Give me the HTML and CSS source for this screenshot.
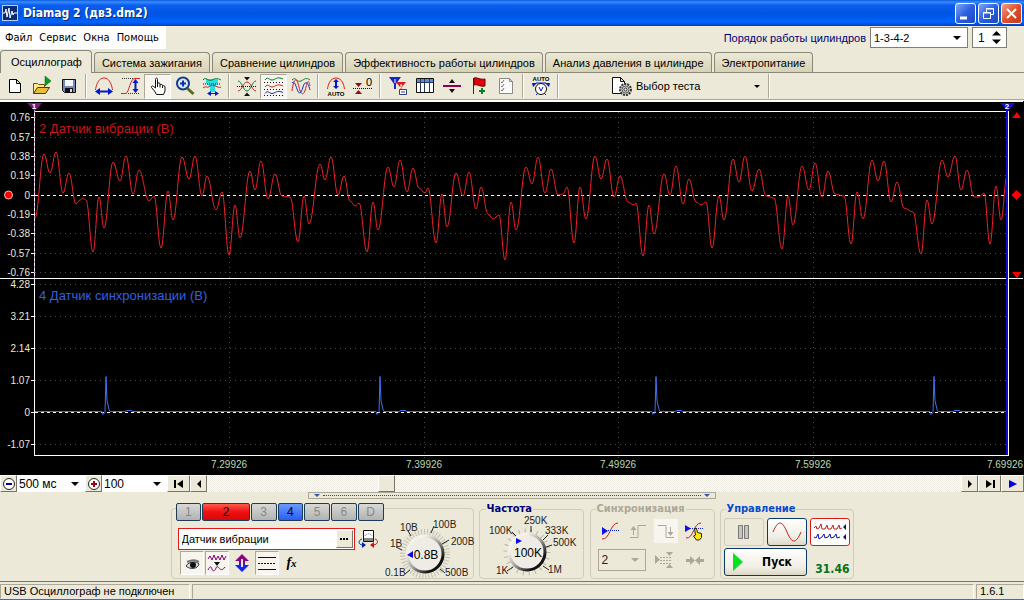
FILE: index.html
```html
<!DOCTYPE html>
<html lang="ru">
<head>
<meta charset="utf-8">
<title>Diamag 2 (дв3.dm2)</title>
<link rel="stylesheet" href="styles.css">
</head>
<body>
<div class="window">
<header class="titlebar">
  <svg class="app-icon" width="16" height="16" viewBox="0 0 16 16"><rect width="16" height="16" fill="#b8d0f8"/><rect x="1" y="1" width="14" height="14" fill="#0a2a78"/><path d="M1 8h2l1-4 1 8 2-9 1 10 2-7 1 4 1-2h3" fill="none" stroke="#fff"/></svg>
  <h1>Diamag 2 (дв3.dm2)</h1>
  <div class="window-buttons">
    <button class="wb" aria-label="Свернуть"><svg width="19" height="19" viewBox="0 0 19 19"><path d="M4 14h7" stroke="#fff" stroke-width="3"/></svg></button>
    <button class="wb" aria-label="Восстановить"><svg width="19" height="19" viewBox="0 0 19 19" fill="none" stroke="#fff"><path d="M7.500 8V4.500h7v6H12M7 5h8M4.500 8.500h7v6h-7zM4 9h8"/></svg></button>
    <button class="wb wb-close" aria-label="Закрыть"><svg width="19" height="19" viewBox="0 0 19 19"><path d="M5 5l9 9M14 5l-9 9" stroke="#fff" stroke-width="2"/></svg></button>
  </div>
</header>

<div class="menu-row">
  <nav class="menu"><button>Файл</button><button>Сервис</button><button>Окна</button><button>Помощь</button></nav>
  <div class="order">
    <label for="order">Порядок работы цилиндров</label>
    <span class="drop order-drop"><select id="order"><option>1-3-4-2</option></select></span>
    <span class="spin"><input id="cyl" type="text" value="1" aria-label="Цилиндр"><svg width="9" height="13" viewBox="0 0 9 13"><path d="M0 4.500L4.500 0 9 4.500zM0 8.500L4.500 13 9 8.500z"/></svg></span>
  </div>
</div>

<div class="tabs" role="tablist">
  <button class="tab active" role="tab">Осциллограф</button>
  <button class="tab" role="tab">Система зажигания</button>
  <button class="tab" role="tab">Сравнение цилиндров</button>
  <button class="tab" role="tab">Эффективность работы цилиндров</button>
  <button class="tab" role="tab">Анализ давления в цилиндре</button>
  <button class="tab" role="tab">Электропитание</button>
</div>

<div class="toolbar">
  <button class="tool" aria-label="Новый"><svg viewBox="0 0 20 20"><path d="M4.500 3.500h7l4 4v9h-11zM11.500 3.500v4h4" fill="#fff" stroke="#000"/></svg></button>
  <button class="tool" aria-label="Открыть"><svg viewBox="0 0 20 20"><path d="M1.500 17.500v-10h4l1 1h6v3" fill="#ffe98a" stroke="#6b5200"/><path d="M1.500 17.500l4-6h12l-4 6z" fill="#e9bd3a" stroke="#4a3900"/><path d="M13 0l6 5-6 5z" fill="#0a9a20" stroke="#056010" stroke-width=".5"/></svg></button>
  <button class="tool" aria-label="Сохранить"><svg viewBox="0 0 20 20"><path d="M3.500 3.500h13v13h-11l-2-2z" fill="#7a86b4" stroke="#111"/><path d="M6 4h8v6H6z" fill="#f4f6ff"/><path d="M6 12h8v4H6z" fill="#111"/><path d="M11 13h2v3h-2z" fill="#ddd"/></svg></button>
  <span class="sep"></span>
  <button class="tool" aria-label="Период"><svg viewBox="0 0 20 20" fill="none"><path d="M1.500 14C2 10 4 2 10 2s8 8 8.500 12" stroke="#e02020"/><path d="M4 15.500h12" stroke="#0018c8" stroke-width="2"/><path d="M1 15.500l5-3.500v7zM19 15.500l-5-3.500v7z" fill="#0018c8"/></svg></button>
  <button class="tool" aria-label="Амплитуда"><svg viewBox="0 0 20 20" fill="none"><path d="M0 17.500h5c3-1 4-15 9-15h5" stroke="#e02020"/><path d="M1 2.500h11M7 17.500h12" stroke="#333" stroke-dasharray="1 1"/><path d="M14.500 5v10" stroke="#0018c8" stroke-width="2"/><path d="M14.500 3l-3 4h6zM14.500 17l-3-4h6z" fill="#0018c8"/></svg></button>
  <button class="tool pressed" aria-label="Рука"><svg viewBox="0 0 20 20"><path d="M7.500 12V3.500c0-2 2-2 2 0V9v-1c0-1.500 2.500-1.500 2.500 0v1.500c0-1.500 2.500-1.500 2.500 0v1c0-1.200 2.500-1.200 2.500.5v4l-1.500 3.500h-7l-2-3.500-3-3.500c-.5-1.500 1-2 2-1z" fill="#fff" stroke="#111"/><path d="M9.500 9v2M12 9.500v2M14.500 10v2" stroke="#111"/></svg></button>
  <button class="tool" aria-label="Масштаб"><svg viewBox="0 0 20 20"><path d="M12.500 12.500l6 5.500" stroke="#5a6a20" stroke-width="3"/><circle cx="8" cy="7.500" r="6" fill="#d4eaff" stroke="#193a86" stroke-width="2"/><path d="M5 7.500h6M8 4.500v6" stroke="#1330a0" stroke-width="2"/></svg></button>
  <button class="tool" aria-label="Фильтр"><svg viewBox="0 0 20 20" fill="none"><path d="M4 3h12v4l-3 4v5H8v-5L4 7z" fill="#1fe0e8"/><path d="M1 4c3-4 5 2 9 0s5-2 9 0" stroke="#087f30"/><path d="M1 8h18" stroke="#111" stroke-dasharray="1 1"/><path d="M1 12c3-3 4 1 7-2s8 3 11 1" stroke="#d02020"/><path d="M8 17.500h6" stroke="#0018c8"/><path d="M5 17.500l4-2.500v5zM17 17.500L13 15v5z" fill="#0018c8"/></svg></button>
  <span class="sep"></span>
  <button class="tool" aria-label="Совместить"><svg viewBox="0 0 20 20" fill="none"><path d="M1 5c4 0 5 10 9 10s5-10 9-10" stroke="#087f30"/><path d="M1 15c4 0 5-9 9-9s5 9 9 9" stroke="#d02020"/><path d="M0 10.500h20" stroke="#111" stroke-dasharray="1 1"/><path d="M7 1h6l-3 3.500zM7 20h6l-3-3.500z" fill="#111"/></svg></button>
  <button class="tool pressed" aria-label="Раздельно"><svg viewBox="0 0 20 20" fill="none"><path d="M1 4c3-4 4 0 7 0s5-4 11-1" stroke="#087f30"/><path d="M0 6.500h20M0 13.500h20M0 19.500h20" stroke="#111" stroke-dasharray="1 2"/><path d="M1 11c3-4 4 0 7 0s5-4 11-1" stroke="#d02020"/><path d="M1 17.500c3-4 4 0 7 0s5-4 11-1" stroke="#1030d0"/></svg></button>
  <button class="tool" aria-label="Вместе"><svg viewBox="0 0 20 20" fill="none"><path d="M1 4c4-4 5 3 9 1s5-4 9-1" stroke="#087f30"/><path d="M1 15C3 0 6 2 8 11s5 9 7 0 3-5 4-1" stroke="#d02020"/><path d="M1 7c2-2 3 0 5 6s4 5 6-2 5-5 7 3" stroke="#1030d0"/></svg></button>
  <span class="sep"></span>
  <button class="tool" aria-label="Авто"><svg viewBox="0 0 20 20" fill="none"><path d="M1.500 13C2 9 4 2 10 2s8 7 8.500 11" stroke="#e02020"/><path d="M10 5v6" stroke="#0018c8" stroke-width="2"/><path d="M10 3L7 6h6zM10 13l-3-3h6z" fill="#0018c8"/><text x="10" y="20" class="mini">AUTO</text></svg></button>
  <button class="tool" aria-label="Ноль"><svg viewBox="0 0 20 20"><path d="M2 7h7l-3.500 4zM2 18h7l-3.500-4z" fill="#8a1020"/><path d="M0 12.500h20" stroke="#111" stroke-dasharray="1 1"/><text x="16" y="10" class="zero">0</text></svg></button>
  <span class="sep"></span>
  <button class="tool" aria-label="Маркеры"><svg viewBox="0 0 20 20"><path d="M1 1h12L8 8v5H6V8z" fill="#1525c8"/><path d="M8 6h10l-4 5v5h-2v-5z" fill="#e01818"/><path d="M7 3v4M12 9h2l-2 3h2" stroke="#fff" fill="none"/><path d="M11.500 13.500h7v5h-7z" fill="#fff" stroke="#334080"/><path d="M13 16h4" stroke="#334080"/></svg></button>
  <button class="tool" aria-label="Таблица"><svg viewBox="0 0 20 20"><path d="M1.500 2.500h17v14h-17z" fill="#fff" stroke="#111"/><path d="M2 3h16v3H2z" fill="#5f8ad8"/><path d="M5.500 3v13M9.500 3v13M14.500 3v13M2 6.500h16" stroke="#283858"/></svg></button>
  <button class="tool" aria-label="Разделитель"><svg viewBox="0 0 20 20"><path d="M1 10h18" stroke="#900050" stroke-width="2"/><path d="M7 7h6l-3-4zM7 13h6l-3 4z" fill="#111"/></svg></button>
  <button class="tool" aria-label="Флаг"><svg viewBox="0 0 20 20"><path d="M4.500 2v16" stroke="#611" /><path d="M5 2c4-1 5 2 11 1v7c-6 1-7-2-11-1z" fill="#e00010" stroke="#700"/><path d="M10 15h6M13 12v6" stroke="#068020" stroke-width="2"/></svg></button>
  <button class="tool" aria-label="Список"><svg viewBox="0 0 20 20"><path d="M3.500 2.500h10l3 3v12h-13zM13.500 2.500v3h3" fill="#fafafa" stroke="#8a8a8a"/><path d="M5 6l1 1 2-3M5 10l1 1 2-3M5 14l1 1 2-3" stroke="#777" fill="none"/></svg></button>
  <span class="sep"></span>
  <button class="tool" aria-label="Автозапуск"><svg viewBox="0 0 20 20" fill="none"><text x="10" y="5" class="mini">AUTO</text><circle cx="10" cy="13" r="5.500" fill="#fff" stroke="#111"/><path d="M8 11l2 4 2-4" stroke="#0018c8"/><path d="M3 9l2-2h10l2 2M5 19l2-2M15 19l-2-2" stroke="#0018c8"/><path d="M1 7l5 0-4 4zM19 7h-5l4 4z" fill="#0018c8"/></svg></button>
  <span class="sep"></span>
  <button class="test-pick">
    <svg width="22" height="20" viewBox="0 0 22 20"><path d="M1.500 1.500h8l4 4v12h-12zM9.500 1.500v4h4" fill="#fff" stroke="#111"/><circle cx="14.500" cy="13.500" r="5.500" fill="#d8d8d0" stroke="#333" stroke-width="2" stroke-dasharray="2 1"/><circle cx="14.500" cy="13.500" r="3.500" fill="none" stroke="#555"/><circle cx="14.500" cy="13.500" r="1.500" fill="#fff" stroke="#222"/></svg>
    <span>Выбор теста</span><i class="caret"></i>
  </button>
  <span class="sep"></span>
</div>

<main class="scope">
  <svg class="plot" viewBox="0 101 1024 374" role="img" aria-label="Осциллограмма">
    <rect y="101" width="1024" height="374"/>
    <g id="grid" class="grid"></g>
    <path class="zero-line" d="M35 195.500H1008M35 412.500H1008"/>
    <path id="trace-sync" class="trace-sync"/>
    <path id="trace-vibration" class="trace-vibration"/>
    <path class="frame" d="M0 101.500H1023M34 111.500H1008M0 278.500H1023M34 455.500H1008M34.500 107V456M1008.500 111V456"/>
    <path d="M34.500 111V278" stroke="#a020a0" stroke-opacity=".5" stroke-dasharray="2 3"/>
    <path d="M1007 107V455" stroke="#0a0ad0" stroke-width="2"/>
    <path d="M27 103h15l-7 8z" fill="#7a1a80"/><path d="M1000 103h15l-7 8z" fill="#1010e0"/>
    <text class="marker" x="34" y="109">1</text><text class="marker" x="1007" y="109">2</text>
    <path d="M1012 118h9l-4-6zM1016.500 190l5 5-5 5-5-5zM1012 272h9l-4 6z" fill="#f00"/>
    <circle cx="8.500" cy="195" r="4" fill="#f00" stroke="#fbb"/>
    <g id="axis-labels" class="axis-labels"></g>
    <text class="name red" x="39" y="133">2 Датчик вибрации (В)</text>
    <text class="name blue" x="39" y="300">4 Датчик синхронизации (В)</text>
  </svg>
</main>

<div class="timebar">
  <button class="sq" aria-label="Уменьшить"><svg width="14" height="14" viewBox="0 0 14 14"><circle cx="7" cy="7" r="5.500" fill="#fff" stroke="#222"/><path d="M4 7h6" stroke="#00a" stroke-width="2"/></svg></button>
  <span class="drop flat span-drop"><select aria-label="Развёртка"><option>500 мс</option></select></span>
  <button class="sq" aria-label="Увеличить"><svg width="14" height="14" viewBox="0 0 14 14"><circle cx="7" cy="7" r="5.500" fill="#fff" stroke="#222"/><path d="M4 7h6M7 4v6" stroke="#a00010" stroke-width="2"/></svg></button>
  <span class="drop flat zoom-drop"><select aria-label="Масштаб"><option>100</option></select></span>
  <button class="sq wide" aria-label="В начало"><svg width="12" height="8" viewBox="0 0 12 8"><path d="M1 0h2v8H1zM10 0v8L4 4z"/></svg></button>
  <button class="sq" aria-label="Назад"><svg width="8" height="8" viewBox="0 0 8 8"><path d="M6 0v8L2 4z"/></svg></button>
  <div class="track"><span class="thumb"></span></div>
  <button class="sq" aria-label="Вперёд"><svg width="8" height="8" viewBox="0 0 8 8"><path d="M2 0v8l4-4z"/></svg></button>
  <button class="sq wide" aria-label="В конец"><svg width="12" height="8" viewBox="0 0 12 8"><path d="M2 0v8l6-4zM9 0h2v8H9z"/></svg></button>
  <button class="sq wide" aria-label="Следить"><svg width="10" height="8" viewBox="0 0 10 8"><path d="M1 0v8l8-4z" fill="#0000f0"/></svg></button>
</div>

<section class="panel">
  <div class="splitter"><i></i><b></b><i></i></div>
  <div class="groups">
    <div class="group channel">
      <div class="channel-left">
        <div class="channels">
          <button>1</button><button class="c-red">2</button><button>3</button><button class="c-blue">4</button><button>5</button><button>6</button><button>D</button>
        </div>
        <div class="sensor-row">
          <div class="sensor"><input type="text" value="Датчик вибрации" aria-label="Датчик"><button aria-label="Выбрать датчик"><svg width="8" height="2" viewBox="0 0 8 2"><path d="M0 0h2v2H0zM3 0h2v2H3zM6 0h2v2H6z"/></svg></button></div>
          <button class="plain" aria-label="Калибровка"><svg width="20" height="20" viewBox="0 0 20 20" fill="none"><path d="M5.500 1.500h10v11h-10z" fill="#fff" stroke="#111"/><path d="M6 9h9v3H6z" fill="#888"/><path d="M7 7c2-3 5-3 7 0" stroke="#777" stroke-dasharray="1 1"/><path d="M4 10c-4 1-4 6 1 6" stroke="#0020b0"/><path d="M8 16l-4-3v6z" fill="#0020b0"/><path d="M17 10c4 1 3 6-2 6" stroke="#d01010"/><path d="M12 16l4-3v6z" fill="#d01010"/></svg></button>
        </div>
        <div class="channel-tools">
          <button class="pressed" aria-label="Показать"><svg viewBox="0 0 20 20"><path d="M4 13c3-5 11-5 13-2-1 5-9 6-13 2z" fill="#ddd" stroke="#333"/><circle cx="11" cy="12" r="3" fill="#111"/><path d="M5 9c4-2 8-3 12 0" fill="none" stroke="#777" stroke-width="2"/></svg></button>
          <button class="pressed" aria-label="Сигнал"><svg viewBox="0 0 20 20" fill="none" stroke="#800070"><path d="M1 6l2-3 2 4 2-5 2 5 2-4 2 4 2-5 2 5 2-4M1 17c2-4 3-4 4-1s3 2 4-1 3 0 4 1 3 1 5-2"/><path d="M7 9h6l-3 4z" fill="#111" stroke="none"/></svg></button>
          <button aria-label="Сдвиг"><svg viewBox="0 0 20 20"><path d="M10 1l7 7h-4v2H7V8H3z" fill="#900080"/><path d="M10 19l-7-7h4v-2h6v2h4z" fill="#1525f0"/><path d="M10 6v8" stroke="#ece9d8" stroke-width="2"/></svg></button>
          <button class="pressed" aria-label="Уровни"><svg viewBox="0 0 20 20" stroke="#111"><path d="M1 4.500h18M1 16.500h18"/><path d="M1 10.500h18" stroke-dasharray="2 1"/></svg></button>
          <button class="fx" aria-label="Функция"><em>f<small>x</small></em></button>
        </div>
      </div>
      <svg class="dial" width="92" height="72" viewBox="384 507 92 72">
        <defs><linearGradient id="rim" x2="1" y2="1"><stop offset=".25" stop-color="#f4f2ea"/><stop offset=".5" stop-color="#a8a8a4"/><stop offset=".8" stop-color="#111"/></linearGradient></defs>
        <circle cx="425" cy="552" r="22" fill="none" stroke="#c2c0b2" stroke-width="6" stroke-dasharray="1 2"/>
        <path d="M410 568l-5 4M402 548l-6-3M411 534l-3-5M431 531l3-7M442 542l7-4M440 567l5 4" stroke="#222"/>
        <circle cx="425" cy="552" r="18" fill="#eeece4" stroke="url(#rim)" stroke-width="3"/>
        <path d="M413 549v7l-6-3z" fill="#0a0af0"/>
        <text x="426" y="557" class="dial-value">0.8В</text>
        <text x="385" y="574">0.1В</text><text x="390" y="545">1В</text><text x="400" y="529">10В</text><text x="433" y="526">100В</text><text x="451" y="543">200В</text><text x="445" y="574">500В</text>
      </svg>
    </div>
    <fieldset class="group freq">
      <legend>Частота</legend>
      <svg class="dial" width="100" height="63" viewBox="482 515 100 63">
        <circle cx="529" cy="552" r="21" fill="none" stroke="#b8b6a8" stroke-width="5" stroke-dasharray="1 5"/>
        <path d="M515 567l-6 4M518 536l-4-4M533 532v-6M545 540l5-5M548 547l6-2M545 566l6 4" stroke="#222"/>
        <circle cx="529" cy="552" r="18" fill="#eeece4" stroke="url(#rim)" stroke-width="3"/>
        <path d="M518 538l6 3-6 3z" fill="#0a0af0"/>
        <text x="530" y="557" class="dial-value">100K</text>
        <text x="498" y="574">1K</text><text x="491" y="534">100K</text><text x="526" y="524">250K</text><text x="547" y="534">333K</text><text x="555" y="546">500K</text><text x="550" y="573">1M</text>
      </svg>
    </fieldset>
    <fieldset class="group sync">
      <legend>Синхронизация</legend>
      <div class="sync-row">
        <button aria-label="Уровень"><svg viewBox="0 0 20 20" fill="none"><path d="M2 18c8 1 8-16 16-16" stroke="#d01818"/><path d="M4 9.500h15" stroke="#0a18d0" stroke-dasharray="1 1"/><path d="M2 6l6 4-6 4z" fill="#1010f0"/></svg></button>
        <button disabled aria-label="Фронт"><svg viewBox="0 0 20 20" fill="none" stroke="#aca899"><path d="M2 16.500h8v-12h8M5.500 14V7"/><path d="M5.500 5l-3 4h6z" fill="#aca899" stroke="none"/></svg></button>
        <button disabled class="lit" aria-label="Спад"><svg viewBox="0 0 20 20" fill="none" stroke="#aca899"><path d="M2 4.500h8v12h8M14.500 6v7"/><path d="M14.500 15l-3-4h6z" fill="#aca899" stroke="none"/></svg></button>
        <button aria-label="Выбрать уровень"><svg viewBox="0 0 20 20" fill="none"><path d="M2 17c8 1 7-15 15-15" stroke="#d01818"/><path d="M4 7.500h15" stroke="#0a18d0" stroke-dasharray="1 1"/><path d="M1 4l6 3.500-6 3.500z" fill="#1010f0"/><path d="M10.500 7.500h2l1 4 4 1v4l-2 2.500h-3l-3-4 2-1z" fill="#ffe800" stroke="#222"/></svg></button>
      </div>
      <div class="sync-row">
        <span class="drop sync-drop"><select disabled aria-label="Канал синхронизации"><option>2</option></select></span>
        <button disabled aria-label="Порог"><svg viewBox="0 0 20 20"><path d="M1 5v9l5-4.500zM12 2h7l-3.500 4zM12 18h7l-3.500-4z" fill="#aca899"/><path d="M6 7.500h12M6 10.500h12M6 13.500h12" stroke="#aca899" stroke-dasharray="2 1"/></svg></button>
        <button disabled aria-label="Центр"><svg viewBox="0 0 20 20"><path d="M1 9h4V6l5 4.500L15 6v3h4v3h-4v3l-5-4.500L5 15v-3H1z" fill="#aca899"/></svg></button>
      </div>
    </fieldset>
    <fieldset class="group control">
      <legend>Управление</legend>
      <div class="control-grid">
        <button class="xp off" disabled aria-label="Пауза"><svg width="14" height="16" viewBox="0 0 14 16" fill="#c8c6ba" stroke="#777"><path d="M1.500 1.500h4v13h-4zM7.500 1.500h4v13h-4z"/></svg></button>
        <button class="xp" aria-label="Один сигнал"><svg width="30" height="20" viewBox="0 0 30 20"><path d="M1 10C6-2 10-2 15 10s9 12 14 0" fill="none" stroke="#d81818"/></svg></button>
        <button class="xp on" aria-label="Непрерывно"><svg width="34" height="18" viewBox="0 0 34 18" fill="none"><path d="M1 5l2-2 1 3 2-1 2-4 1 5 3 0 2-4 1 4 3 0 2-4 1 4 3 0 2-4 1 4 2-1" stroke="#d01818"/><path d="M1 14l2 1 2-4 1 5 3-2 2-3 1 4 3-1 2-3 1 4 3-1 2-3 1 4 3-1" stroke="#1010b0"/><path d="M33 1v6l-3-3zM33 11v6l-3-3z" fill="#101060"/></svg></button>
        <button class="xp start"><svg width="10" height="20" viewBox="0 0 10 20"><path d="M0 1l10 9-10 9z" fill="#08e020"/></svg><span>Пуск</span></button>
        <output>31.46</output>
      </div>
    </fieldset>
  </div>
</section>

<footer class="status"><span>USB Осциллограф не подключен</span><span></span><span>1.6.1</span></footer>
</div>
<script src="scope.js"></script>
</body>
</html>
```

FILE: styles.css
```css
* { box-sizing: border-box; }
body { margin: 0; background: #ece9d8; color: #000; font: 11px/14px "Liberation Sans", Arial, sans-serif; }
button, input, select { font: inherit; color: inherit; }
button { background: none; border: 0; padding: 0; display: flex; align-items: center; justify-content: center; }
.window { display: flex; flex-direction: column; min-height: 100vh; border-bottom: 2px solid #3170c4; }

.titlebar { display: flex; align-items: center; height: 26px; padding: 0 2px; gap: 5px; color: #fff;
  background: linear-gradient(#0a5ce0, #3a8cff 2px, #0a5ff0 5px, #0054e3 14px, #0064ff 22px, #0040c0); }
.titlebar h1 { flex: 1; margin: 0; font: bold 12px/20px "DejaVu Sans Condensed", "DejaVu Sans", sans-serif; text-shadow: 1px 1px #0a2a80; }
.window-buttons { display: flex; gap: 2px; }
.wb { width: 21px; height: 21px; border: 1px solid #fff; border-radius: 3px; background: linear-gradient(135deg, #7fa6f5, #2a5fe0 50%, #1c48c4); }
.wb-close { background: linear-gradient(135deg, #f0a088, #e0502c 50%, #c03a18); }

.menu-row { display: flex; justify-content: space-between; height: 24px; }
.menu { display: flex; align-items: center; gap: 7px; padding: 0 7px 0 5px; height: 23px; background: #fff; font-family: "DejaVu Sans Condensed", "DejaVu Sans", sans-serif; }
.order { display: flex; align-items: center; gap: 4px; padding: 1px 17px 2px 0; color: #000078; }
.drop { position: relative; display: block; border: 1px solid #7f7f78; background: #fff; color: #000; }
.drop select { width: 100%; height: 100%; border: 0; padding: 0 3px; background: none; appearance: none; font-size: 12px; }
.drop::after { content: ""; position: absolute; right: 6px; top: 50%; margin-top: -2px; border: 4px solid transparent; border-top-color: #000; border-bottom: 0; pointer-events: none; }
.order-drop { width: 98px; height: 21px; }
.order-drop select { font-size: 11px; }
.spin { display: flex; align-items: center; width: 35px; height: 21px; border: 1px solid #7f7f78; background: #fff; color: #000; padding-right: 5px; }
.spin input { flex: 1; min-width: 0; border: 0; padding: 0 5px; background: none; font-size: 12px; }

.tabs { display: flex; align-items: flex-end; height: 23px; gap: 2px; border-bottom: 1px solid #8a8878; }
.tab { height: 20px; padding: 0 7px; border: 1px solid #8a8878; border-bottom: 0; border-radius: 4px 4px 0 0; background: linear-gradient(#ece9d8, #d6d2b4); white-space: nowrap; }
.tab.active { height: 23px; margin-bottom: -1px; padding: 0 9px 0 10px; background: #ece9d8; }

.toolbar { display: flex; align-items: center; height: 27px; padding-left: 1px; border-bottom: 1px solid #a8a698; }
.tool { width: 27px; height: 25px; border: 1px solid transparent; }
.tool svg { width: 20px; height: 20px; }
.pressed { border: 1px solid; border-color: #aca899 #fff #fff #aca899; background: #f7f5ee; }
.sep { width: 8px; height: 24px; background: linear-gradient(90deg, transparent 3px, #aca899 3px 4px, #fff 4px 5px, transparent 5px); }
.mini { font: bold 6px "Liberation Sans", sans-serif; fill: #000; text-anchor: middle; }
.zero { font: 11px "Liberation Sans", sans-serif; text-anchor: middle; }
.test-pick { width: 203px; height: 24px; padding: 0 5px 0 49px; gap: 3px; }
.test-pick span { flex: 1; text-align: left; }
.caret { border: 3px solid transparent; border-top-color: #000; border-bottom: 0; }

.scope { display: block; border-top: 1px solid #fff; }
.plot { display: block; width: 100%; height: auto; background: #000; }
.grid path { stroke: #484c44; stroke-dasharray: 1 4; }
.zero-line { stroke: #fff; stroke-dasharray: 3 3; }
.frame { stroke: #fff; }
.trace-vibration { fill: none; stroke: #f02028; }
.trace-sync { fill: none; stroke: #3f74f4; }
.axis-labels text { font: 10px "Liberation Sans", sans-serif; fill: #e8e8d8; text-anchor: end; }
.axis-labels .time { fill: #b8d8b0; text-anchor: middle; }
.axis-labels path { stroke: #fff; }
.marker { font: bold 8px "Liberation Sans", sans-serif; fill: #fff; text-anchor: middle; }
.name { font: 13px "Liberation Sans", sans-serif; }
.red { fill: #c8141c; }
.blue { fill: #3060e0; }

.timebar { display: flex; height: 17px; }
.sq { width: 17px; flex: none; background: #ece9d8; border: 1px solid; border-color: #fff #777468 #777468 #fff; }
.wide { width: 23px; }
.flat { border: 0; }
.span-drop { width: 68px; }
.zoom-drop { width: 65px; }
.flat select { padding: 0 2px; }
.track { flex: 1; display: flex; padding-left: 171px; background: repeating-conic-gradient(#fff 0 25%, #ece9e0 0 50%) 0 0 / 2px 2px; }
.thumb { width: 17px; background: #ece9d8; border: 1px solid; border-color: #fff #777468 #777468 #fff; }

.panel { flex: 1; display: flex; flex-direction: column; align-items: center; border-bottom: 1px solid #777468; }
.splitter { display: flex; align-items: center; width: 408px; max-width: 100%; height: 7px; padding: 0 5px; gap: 3px; border: 1px solid #aca899; }
.splitter i { border: 3px solid transparent; border-top-color: #3058a8; border-bottom: 0; }
.splitter b { flex: 1; border-top: 1px dotted #446; }
.groups { display: flex; justify-content: center; gap: 5px; padding: 4px 0 2px; }
.group { margin: 0; border: 1px solid #cfccb9; border-radius: 4px; min-width: 0; padding: 0; }
.group legend { margin-left: 6px; padding: 0 1px; font: bold 11px/12px "DejaVu Sans Condensed", "DejaVu Sans", sans-serif; }
.dial { display: block; flex: none; }
.dial text { font: 10px "Liberation Sans", sans-serif; fill: #222; }
.dial .dial-value { font-size: 12px; text-anchor: middle; fill: #000; }

.channel { display: flex; width: 303px; margin-top: 5px; padding-left: 4px; height: 71px; }
.channel-left { width: 208px; flex: none; display: flex; flex-direction: column; }
.channels { display: flex; gap: 1px; height: 18px; margin-top: -6px; flex: none; background: #ece9d8; }
.channels button { width: 26px; border: 1px solid #1c3c58; border-radius: 2px; color: #888; font-size: 12px; background: linear-gradient(#d8d8d6, #b2b2b2); }
.channels .c-red { width: 48px; color: #200; background: linear-gradient(#ff5a4a, #f01010 50%, #d80808); }
.channels .c-blue { color: #001; background: linear-gradient(#6a9aff, #2a5cf8); }
.sensor-row { display: flex; gap: 3px; margin: 7px 0 0 2px; height: 22px; }
.sensor { display: flex; width: 177px; border: 1px solid #e01818; background: #fff; padding: 1px; }
.sensor input { flex: 1; min-width: 0; border: 0; padding: 0 2px; background: none; }
.sensor button { width: 17px; background: #ece9d8; border: 1px solid; border-color: #fff #777468 #777468 #fff; }
.channel-tools { display: flex; gap: 1px; margin: 1px 0 0 4px; }
.channel-tools button, .sync-row button { width: 24px; height: 24px; }
.channel-tools svg, .sync-row svg { width: 20px; height: 20px; }
.fx { font: italic bold 14px/16px "Liberation Serif", serif; }
.fx small { font-size: 11px; }

.freq { width: 105px; }
.freq legend { color: #000078; }
.sync { width: 125px; margin-left: 1px; padding: 0 5px; }
.sync legend { margin-left: 0; color: #aca899; }
.sync-row { display: flex; align-items: center; justify-content: space-between; height: 26px; margin-top: 3px; padding: 0 2px; }
.lit { background: #f7f5ee; }
.sync-drop { width: 48px; height: 22px; background: #ece9d8; border-color: #aca899; }
.sync-drop select { color: #222; opacity: 1; }
.sync-drop::after { border-top-color: #aca899; }
.control { width: 134px; padding: 0 3px; }
.control legend { color: #0a48d0; margin-left: 2px; }
.control-grid { display: grid; grid-template-columns: 40px 40px 40px; grid-auto-rows: 28px; gap: 2px 3px; margin-top: 3px; }
.xp { border: 1px solid #0c3a68; border-radius: 3px; background: linear-gradient(#fff, #f0eee4 70%, #dcd8c8); }
.off { border-color: #cfccb9; background: #ece9d8; }
.on { border: 1px solid #e01818; background: #fff; }
.start { grid-column: span 2; font: bold 12px/16px "DejaVu Sans Condensed", sans-serif; gap: 19px; padding-right: 5px; }
.control output { align-self: end; justify-self: end; color: #087018; font: bold 12px/14px "DejaVu Sans Condensed", sans-serif; }

.status { display: grid; grid-template-columns: 190px 1fr 48px; gap: 2px; height: 17px; padding-top: 2px; }
.status span { border: 1px solid; border-color: #aca899 #fff transparent #aca899; padding: 0 3px; line-height: 13px; white-space: nowrap; }
```

FILE: scope.js
```js
const svgNs = "http://www.w3.org/2000/svg";

function add(parent, name, attrs, text) {
  const el = document.createElementNS(svgNs, name);
  for (const key in attrs) el.setAttribute(key, attrs[key]);
  if (text !== undefined) el.textContent = text;
  parent.append(el);
}

const levels = [
  [117, "0.76"], [137, "0.57"], [156, "0.38"], [175, "0.19"], [195, "0"],
  [214, "-0.19"], [233, "-0.38"], [253, "-0.57"], [272, "-0.76"],
  [284, "4.28"], [316, "3.21"], [348, "2.14"], [380, "1.07"], [412, "0"], [444, "-1.07"]
];
const times = [[229, "7.29926"], [424, "7.39926"], [618, "7.49926"], [813, "7.59926"], [1005, "7.69926"]];
const grid = document.getElementById("grid");
const labels = document.getElementById("axis-labels");

for (const [y, label] of levels) {
  if (label !== "0") add(grid, "path", { d: `M35 ${y + 0.5}H1007` });
  add(labels, "path", { d: `M31 ${y + 0.5}H34` });
  add(labels, "text", { x: 30, y: y + 4 }, label);
}
for (const [x, label] of times) {
  if (x < 1000) add(grid, "path", { d: `M${x + 0.5} 112V458` });
  add(labels, "text", { x, y: 468, class: "time" }, label);
}

// Turning points of the vibration signal.
const vibration = [
  35,218, 44,154, 50,173, 56,152, 63,193, 69,173, 76,204, 80,200, 83,198, 86,200, 93,252, 99,197, 104,228,
  113,162, 120,181, 126,156, 133,194, 139,170, 149,201, 154,196, 161,248, 168,191, 173,220,
  182,157, 189,179, 195,156, 202,196, 207,176, 216,210, 222,192, 229,255, 235,205, 240,238,
  250,171, 255,190, 261,161, 268,199, 275,174, 282,196, 290,197, 298,242, 304,196, 309,224,
  320,164, 325,180, 331,157, 338,195, 344,176, 350,201, 355,206, 359,203, 367,252, 373,202, 378,230,
  388,167, 394,187, 400,160, 407,192, 413,168, 419,188, 425,193, 428,188, 436,243, 442,194, 447,227,
  456,173, 463,196, 469,172, 476,209, 481,187, 488,214, 493,219, 499,215, 505,260, 511,202, 516,230,
  526,167, 532,184, 538,157, 545,193, 551,169, 558,195, 563,194, 567,187, 574,243, 580,187, 586,219,
  595,156, 601,179, 607,159, 614,197, 620,176, 628,202, 634,205, 636,203, 643,256, 649,205, 654,234,
  664,174, 670,195, 676,166, 683,204, 689,179, 696,202, 701,205, 706,202, 712,248, 719,196, 724,220,
  733,159, 739,182, 745,156, 752,191, 759,169, 766,196, 774,198, 782,249, 788,196, 793,225,
  802,166, 809,190, 815,163, 822,197, 828,171, 835,194, 844,196, 851,244, 857,192, 863,219,
  872,160, 878,181, 884,161, 891,202, 897,182, 904,208, 913,212, 921,254, 927,200, 932,224,
  942,160, 948,177, 955,156, 961,190, 967,170, 974,197, 979,197, 984,193, 990,244, 996,186, 1001,220, 1007,176
];
let curve = `M${vibration[0]} ${vibration[1]}`;
for (let i = 2; i < vibration.length; i += 2) {
  const [px, py, x, y] = vibration.slice(i - 2, i + 2);
  const pull = (x - px) * 0.4;
  curve += `C${px + pull} ${py} ${x - pull} ${y} ${x} ${y}`;
}
document.getElementById("trace-vibration").setAttribute("d", curve);

let pulses = "M35 411.5";
for (const x of [106, 380, 656, 934]) {
  pulses += `H${x - 4}l1 3 2 -2 1 -36 1 24 2 9 1 2 1 0h14l2 -1h4l2 1`;
}
document.getElementById("trace-sync").setAttribute("d", pulses + "H1007");
```
